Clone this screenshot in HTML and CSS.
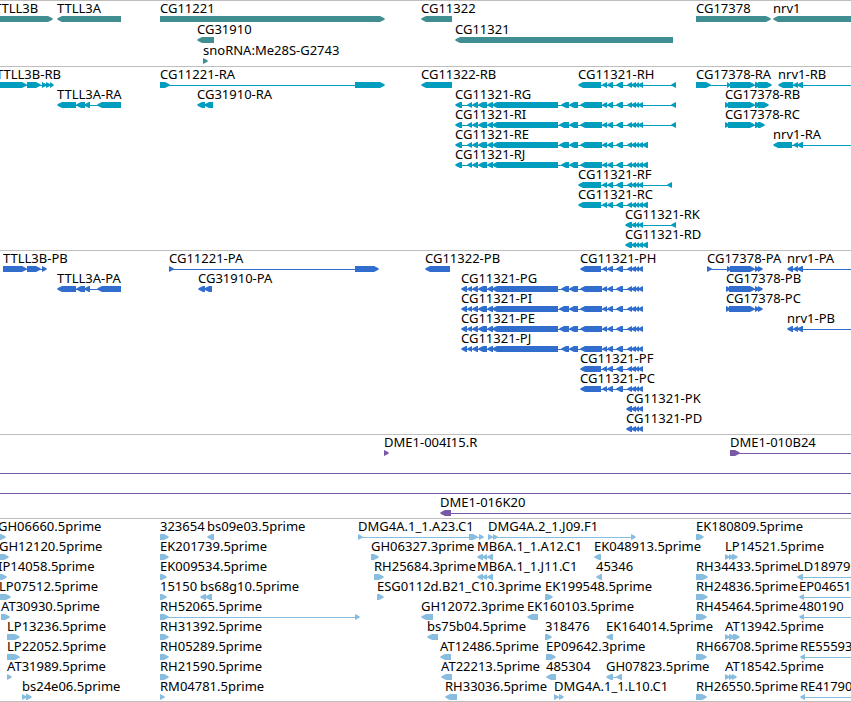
FILE: index.html
```html
<!DOCTYPE html>
<html lang="en">
<head>
    <meta charset="utf-8">
    <title>Genome Browser</title>
    <link rel="stylesheet" href="styles.css">
</head>
<body>
    <main class="browser">
        <section class="track genes" id="genes" aria-label="Genes"></section>
        <section class="track transcripts" id="transcripts" aria-label="Transcripts"></section>
        <section class="track cds" id="cds" aria-label="CDS"></section>
        <section class="track clones" id="clones" aria-label="Clones"></section>
        <section class="track ests" id="ests" aria-label="ESTs"></section>
    </main>
    <script src="tracks.js"></script>
</body>
</html>
```
FILE: styles.css
```css
body {
    margin: 0;
    background: #fff;
    color: #000;
    font-family: "Noto Sans", "DejaVu Sans", sans-serif;
    font-size: 13px;
    line-height: 15px;
}

.browser {
    overflow: hidden;
    border-bottom: 1px solid #bebebe;
}

/* One track per feature type, separated by a grey rule */
.track {
    border-top: 1px solid #bebebe;
    padding-bottom: 3px;
}

.genes {
    color: #408e92;
    padding-bottom: 2px;
}

.transcripts {
    color: #009dbf;
}

.cds {
    color: #306dcd;
}

.clones {
    color: #7759a6;
}

.ests {
    color: #87bddf;
    padding-bottom: 2px;
}

.row {
    position: relative;
    height: 20px;
}

.genes .row {
    height: 21px;
}

/* Labels sit at the start coordinate of their feature */
.label {
    position: absolute;
    top: 0;
    color: #000;
    white-space: nowrap;
}

.glyphs {
    position: absolute;
    top: 15px;
    left: 0;
    width: 100%;
    height: 6px;
    fill: currentColor;
}
```
FILE: tracks.js
```js
const SVG = "http://www.w3.org/2000/svg";
const HEAD = 5;
const EDGE = "edge"; // feature runs past the right side of the view

// exons shared by the CG11321 isoforms
const tail = [[602, 607], [607, 613], [616, 623], [627, 632], [631, 636], [635, 639], [638, 643]];
const shortTail = [[631, 636], [635, 639], [638, 643]];
const body = [[472, 478], [478, 487], [487, 493], [492, 558]];
const mid = [[561, 569], [569, 578], [580, 602]];
const midLong = [[559, 569], [569, 578], [580, 602]];
const rStart = [[455, 462], [467, 472]];
const pStart = [[461, 467], [467, 472]];
const nrv = [[793, 798], [797, 803], EDGE];

// each feature: [label, label x, strand, exons]
const tracks = {
    genes: [
        [
            ["TTLL3B", -6, "+", [[-6, 53]]],
            ["TTLL3A", 57, "-", [[57, 121]]],
            ["CG11221", 160, "+", [[160, 385]]],
            ["CG11322", 421, "-", [[421, 452]]],
            ["CG17378", 696, "+", [[696, 771]]],
            ["nrv1", 773, "-", [[773, 4000]]]
        ],
        [
            ["CG31910", 197, "-", [[197, 214]]],
            ["CG11321", 455, "-", [[455, 673]]]
        ],
        [["snoRNA:Me28S-G2743", 203, "+", [[203, 208]]]]
    ],
    transcripts: [
        [
            ["TTLL3B-RB", -4, "+", [[-6, 27], [27, 41], [42, 47], [46, 51], [50, 54]]],
            ["CG11221-RA", 160, "+", [[160, 170], [355, 385]]],
            ["CG11322-RB", 421, "-", [[421, 452]]],
            ["CG11321-RH", 578, "-", [[578, 601], ...tail, [671, 676]]],
            ["CG17378-RA", 696, "+", [[696, 711], [727, 731], [730, 755], [755, 761], [758, 772]]],
            ["nrv1-RB", 778, "-", [[778, 793], ...nrv]]
        ],
        [
            ["TTLL3A-RA", 57, "-", [[57, 76], [76, 85], [84, 90], [97, 121]]],
            ["CG31910-RA", 197, "-", [[197, 205], [204, 213]]],
            ["CG11321-RG", 455, "-", [...rStart, ...body, ...mid, ...tail, [671, 676]]],
            ["CG17378-RB", 725, "+", [[725, 730], [728, 755], [755, 761], [758, 769]]]
        ],
        [
            ["CG11321-RI", 455, "-", [...rStart, ...body, ...midLong, ...tail, [671, 676]]],
            ["CG17378-RC", 725, "+", [[725, 730], [728, 755], [755, 761], [758, 765]]]
        ],
        [
            ["CG11321-RE", 455, "-", [...rStart, ...body, ...midLong, ...tail, [642, 648]]],
            ["nrv1-RA", 773, "-", [[773, 792], ...nrv]]
        ],
        [["CG11321-RJ", 455, "-", [...rStart, ...body, ...mid, ...tail, [642, 648]]]],
        [["CG11321-RF", 578, "-", [[578, 601], ...tail, [667, 672]]]],
        [["CG11321-RC", 578, "-", [[578, 601], ...tail, [642, 648]]]],
        [["CG11321-RK", 625, "-", [[625, 632], ...shortTail, [671, 676]]]],
        [["CG11321-RD", 625, "-", [[625, 632], ...shortTail, [642, 648]]]]
    ],
    cds: [
        [
            ["TTLL3B-PB", 3, "+", [[3, 27], [27, 41], [42, 47]]],
            ["CG11221-PA", 169, "+", [[169, 174], [355, 379]]],
            ["CG11322-PB", 425, "-", [[425, 450]]],
            ["CG11321-PH", 580, "-", [[580, 601], ...tail]],
            ["CG17378-PA", 707, "+", [[707, 712], [727, 732], [730, 755], [755, 760], [758, 763]]],
            ["nrv1-PA", 787, "-", [[787, 793], ...nrv]]
        ],
        [
            ["TTLL3A-PA", 57, "-", [[57, 76], [76, 85], [84, 90], [97, 121]]],
            ["CG31910-PA", 198, "-", [[198, 205], [204, 212]]],
            ["CG11321-PG", 461, "-", [...pStart, ...body, ...mid, ...tail]],
            ["CG17378-PB", 726, "+", [[726, 731], [729, 755], [755, 760], [758, 763]]]
        ],
        [
            ["CG11321-PI", 461, "-", [...pStart, ...body, ...midLong, ...tail]],
            ["CG17378-PC", 726, "+", [[726, 731], [729, 755], [755, 760], [758, 763]]]
        ],
        [
            ["CG11321-PE", 461, "-", [...pStart, ...body, ...midLong, ...tail]],
            ["nrv1-PB", 787, "-", [[787, 793], ...nrv]]
        ],
        [["CG11321-PJ", 461, "-", [...pStart, ...body, ...mid, ...tail]]],
        [["CG11321-PF", 580, "-", [[580, 601], ...tail]]],
        [["CG11321-PC", 580, "-", [[580, 601], ...tail]]],
        [["CG11321-PK", 626, "-", [[626, 632], ...shortTail]]],
        [["CG11321-PD", 626, "-", [[626, 632], ...shortTail]]]
    ],
    clones: [
        [
            ["DME1-004I15.R", 384, "+", [[384, 389]]],
            ["DME1-010B24", 730, "+", [[730, 740], EDGE]]
        ],
        [["", 0, "+", [EDGE]]],
        [["", 0, "+", [EDGE]]],
        [["DME1-016K20", 440, "-", [[440, 451], EDGE]]]
    ],
    ests: [
        [
            ["GH06660.5prime", -2, "+", [[-5, 6]]],
            ["323654", 160, "+", [[160, 169]]],
            ["bs09e03.5prime", 207, "-", [[207, 214]]],
            ["DMG4A.1_1.A23.C1", 358, "+", [[358, 363], [469, 478], [479, 484]]],
            ["DMG4A.2_1.J09.F1", 488, "+", [[488, 493], [493, 498], [631, 636]]],
            ["EK180809.5prime", 696, "+", [[696, 704]]]
        ],
        [
            ["GH12120.5prime", -1, "+", [[-5, 9]]],
            ["EK201739.5prime", 160, "+", [[160, 169]]],
            ["GH06327.3prime", 371, "+", [[371, 379]]],
            ["MB6A.1_1.A12.C1", 477, "-", [[477, 483], [482, 487], [487, 493]]],
            ["EK048913.5prime", 594, "-", [[594, 601]]],
            ["LP14521.5prime", 725, "+", [[725, 730], [729, 734], [732, 738]]]
        ],
        [
            ["IP14058.5prime", -2, "+", [[-5, 7]]],
            ["EK009534.5prime", 160, "+", [[160, 167]]],
            ["RH25684.3prime", 374, "+", [[374, 384]]],
            ["MB6A.1_1.J11.C1", 477, "-", [[477, 483], [482, 487], [487, 493]]],
            ["45346", 596, "-", [[596, 602]]],
            ["RH34433.5prime", 696, "+", [[696, 708]]],
            ["LD18979", 797, "-", [[797, 803], EDGE]]
        ],
        [
            ["LP07512.5prime", -1, "+", [[-5, 11]]],
            ["15150", 160, "+", [[160, 167]]],
            ["bs68g10.5prime", 200, "-", [[200, 206], [205, 212]]],
            ["ESG0112d.B21_C10.3prime", 377, "+", [[377, 384]]],
            ["EK199548.5prime", 545, "+", [[545, 553]]],
            ["RH24836.5prime", 696, "+", [[696, 708]]],
            ["EP04651", 799, "-", [[799, 804], EDGE]]
        ],
        [
            ["AT30930.5prime", 1, "+", [[1, 10]]],
            ["RH52065.5prime", 160, "+", [[160, 169], [355, 360]]],
            ["GH12072.3prime", 421, "-", [[421, 433]]],
            ["EK160103.5prime", 527, "-", [[527, 538]]],
            ["RH45464.5prime", 696, "+", [[696, 707]]],
            ["480190", 799, "-", [[799, 804], EDGE]]
        ],
        [
            ["LP13236.5prime", 7, "+", [[7, 20]]],
            ["RH31392.5prime", 160, "+", [[160, 169]]],
            ["bs75b04.5prime", 427, "-", [[427, 438]]],
            ["318476", 545, "+", [[545, 552]]],
            ["EK164014.5prime", 606, "-", [[606, 613]]],
            ["AT13942.5prime", 725, "+", [[725, 730], [729, 735], [733, 740]]]
        ],
        [
            ["LP22052.5prime", 7, "+", [[7, 20]]],
            ["RH05289.5prime", 160, "+", [[160, 169]]],
            ["AT12486.5prime", 440, "-", [[440, 451]]],
            ["EP09642.3prime", 546, "+", [[546, 556]]],
            ["RH66708.5prime", 696, "+", [[696, 707]]],
            ["RE55593", 800, "-", [[800, 805], EDGE]]
        ],
        [
            ["AT31989.5prime", 7, "+", [[7, 12]]],
            ["RH21590.5prime", 160, "+", [[160, 169]]],
            ["AT22213.5prime", 441, "-", [[441, 452]]],
            ["485304", 546, "-", [[546, 556]]],
            ["GH07823.5prime", 606, "-", [[606, 613], [616, 622]]],
            ["AT18542.5prime", 725, "+", [[725, 730], [729, 734], [732, 737]]]
        ],
        [
            ["bs24e06.5prime", 22, "+", [[22, 27], [26, 32]]],
            ["RM04781.5prime", 160, "+", [[160, 165]]],
            ["RH33036.5prime", 445, "-", [[445, 457]]],
            ["DMG4A.1_1.L10.C1", 554, "+", [[554, 559], [559, 564]]],
            ["RH26550.5prime", 696, "+", [[696, 707]]],
            ["RE41790", 800, "-", [[800, 805], EDGE]]
        ]
    ]
};

function addShape(svg, name, attrs) {
    const el = document.createElementNS(SVG, name);
    for (const key in attrs) {
        el.setAttribute(key, attrs[key]);
    }
    svg.appendChild(el);
}

// box with a rounded-off arrow head on the side the strand points to
function exonPoints(start, end, strand) {
    const head = Math.min(HEAD, end - start);
    const back = strand === "-" ? end : start;
    const tip = strand === "-" ? start : end;
    const dir = strand === "-" ? 1 : -1;
    const neck = tip + dir * head;
    const nose = tip + dir;
    return `${back},0 ${neck},0 ${nose},2 ${tip},3 ${nose},4 ${neck},6 ${back},6`;
}

function drawFeature(svg, strand, exons) {
    const toEdge = exons.includes(EDGE);
    const boxes = exons.filter(e => e !== EDGE);
    const start = boxes.length ? boxes[0][0] + 1 : 0;

    if (toEdge) {
        addShape(svg, "rect", { x: start, y: 3, width: "100%", height: 1 });
    } else if (boxes.length > 1) {
        const end = boxes[boxes.length - 1][1] - 1;
        addShape(svg, "rect", { x: start, y: 3, width: end - start, height: 1 });
    }
    boxes.forEach(([from, to]) => {
        addShape(svg, "polygon", { points: exonPoints(from, to, strand) });
    });
}

Object.keys(tracks).forEach(id => {
    const track = document.getElementById(id);
    tracks[id].forEach(features => {
        const row = document.createElement("div");
        row.className = "row";
        const svg = document.createElementNS(SVG, "svg");
        svg.setAttribute("class", "glyphs");
        row.appendChild(svg);
        features.forEach(([name, x, strand, exons]) => {
            drawFeature(svg, strand, exons);
            if (name) {
                const label = document.createElement("span");
                label.className = "label";
                label.style.left = x + "px";
                label.textContent = name;
                row.appendChild(label);
            }
        });
        track.appendChild(row);
    });
});
```
